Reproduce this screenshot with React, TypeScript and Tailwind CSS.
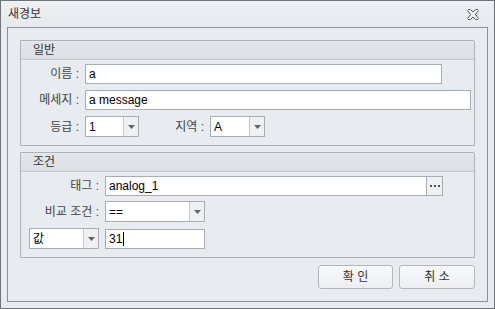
import React from "react";

const font = { fontFamily: '"Liberation Sans", "Noto Sans CJK KR", sans-serif' };

function Arrow() {
  return (
    <svg width="7" height="4" viewBox="0 0 7 4">
      <path d="M0 0 H7 L3.5 4 Z" fill="#5f636a" />
    </svg>
  );
}

function TextBox({ value, width, cursor }: { value: string; width: string; cursor?: boolean }) {
  return (
    <div
      className={`${width} h-[20px] bg-white border border-[#a9aeb5] flex items-center pl-[3px] text-[12px] text-black`}
    >
      <span>{value}</span>
      {cursor && <span className="ml-[1px] w-px h-[14px] bg-black" />}
    </div>
  );
}

function Combo({ value, width }: { value: string; width: string }) {
  return (
    <div className={`${width} h-[21px] bg-white border border-[#a9aeb5] flex text-[12px] text-black`}>
      <div className="flex-1 flex items-center pl-[3px]">{value}</div>
      <div className="w-[15px] border-l border-[#c3c7cc] bg-[#eef0f2] flex items-center justify-center">
        <Arrow />
      </div>
    </div>
  );
}

function Group({ title, children }: { title: string; children: React.ReactNode }) {
  return (
    <div className="border border-[#aeb2b8] rounded-tr-[2px] flex flex-col">
      <div className="h-[19px] border-b border-[#c4c8cd] bg-gradient-to-b from-[#e2e5e9] to-[#dcdfe3] flex items-center pl-[12px] text-[12px] text-[#333]">
        {title}
      </div>
      {children}
    </div>
  );
}

function Label({ text, width }: { text: string; width: string }) {
  return (
    <div className={`${width} shrink-0 text-right pr-[6px] text-[12px] text-[#444]`}>{text}</div>
  );
}

export default function App() {
  return (
    <div
      className="w-[495px] h-[309px] border border-[#6f737a] bg-[#e8ebef] flex flex-col"
      style={font}
    >
      <div className="h-[26px] shrink-0 flex items-center justify-between pl-[7px] pr-[15px] bg-gradient-to-b from-[#eef0f3] to-[#e6e9ed]">
        <span className="text-[12px] text-[#333]">새경보</span>
        <svg width="12" height="11" viewBox="0 0 12 11">
          <path
            d="M0.5 1.5 L1.5 0.5 H3.5 L6 3 L8.5 0.5 H10.5 L11.5 1.5 L8.5 5.5 L11.5 9.5 L10.5 10.5 H8.5 L6 8 L3.5 10.5 H1.5 L0.5 9.5 L3.5 5.5 Z"
            fill="none"
            stroke="#555a60"
            strokeWidth="1"
          />
        </svg>
      </div>
      <div className="ml-[6px] mr-[6px] mb-[6px] flex-1 border border-[#8c9096] flex flex-col px-[12px] pt-[12px] pb-[11px]">
        <Group title="일반">
          <div className="flex flex-col gap-[6px] pt-[4px] pb-[8px]">
            <div className="flex items-center">
              <Label text="이름 :" width="w-[64px]" />
              <TextBox value="a" width="w-[357px]" />
            </div>
            <div className="flex items-center">
              <Label text="메세지 :" width="w-[64px]" />
              <TextBox value="a message" width="w-[386px]" />
            </div>
            <div className="flex items-center">
              <Label text="등급 :" width="w-[64px]" />
              <Combo value="1" width="w-[54px]" />
              <Label text="지역 :" width="w-[71px]" />
              <Combo value="A" width="w-[55px]" />
            </div>
          </div>
        </Group>
        <div className="h-[6px]" />
        <Group title="조건">
          <div className="flex flex-col pt-[4px] pb-[8px]">
            <div className="flex items-center">
              <Label text="태그 :" width="w-[84px]" />
              <div className="w-[338px] h-[20px] bg-white border border-[#a9aeb5] flex text-[12px] text-black">
                <div className="flex-1 flex items-center pl-[3px]">analog_1</div>
                <div className="w-[16px] border-l border-[#a9aeb5] bg-[#eef0f2] flex items-center justify-center gap-[2px]">
                  <span className="w-[2px] h-[2px] bg-[#4a4e55]" />
                  <span className="w-[2px] h-[2px] bg-[#4a4e55]" />
                  <span className="w-[2px] h-[2px] bg-[#4a4e55]" />
                </div>
              </div>
            </div>
            <div className="flex items-center mt-[5px]">
              <Label text="비교 조건 :" width="w-[84px]" />
              <Combo value="==" width="w-[100px]" />
            </div>
            <div className="flex items-center mt-[6px]">
              <div className="w-[8px] shrink-0" />
              <Combo value="값" width="w-[70px]" />
              <div className="w-[6px] shrink-0" />
              <TextBox value="31" width="w-[100px]" cursor />
            </div>
          </div>
        </Group>
        <div className="flex justify-end gap-[6px] mt-[7px]">
          <button className="w-[75px] h-[24px] rounded-[3px] border border-[#b3b7bd] bg-gradient-to-b from-[#f8f9fa] to-[#eceef1] text-[12px] text-[#333]">
            확 인
          </button>
          <button className="w-[76px] h-[24px] rounded-[3px] border border-[#b3b7bd] bg-gradient-to-b from-[#f8f9fa] to-[#eceef1] text-[12px] text-[#333]">
            취 소
          </button>
        </div>
      </div>
    </div>
  );
}
